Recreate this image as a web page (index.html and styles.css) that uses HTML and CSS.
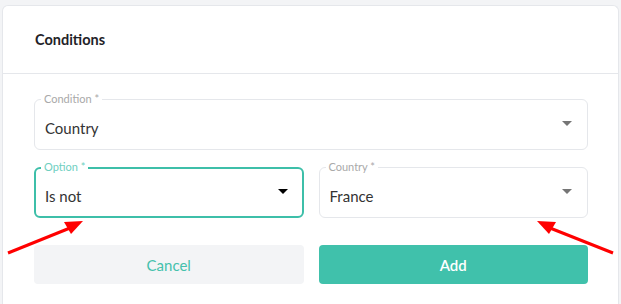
FILE: index.html
```html
<!DOCTYPE html>
<html lang="en">
<head>
    <meta charset="UTF-8">
    <title>Conditions</title>
    <link rel="stylesheet" href="styles.css">
</head>
<body>
    <div class="card">
        <div class="card-header">
            <h2>Conditions</h2>
        </div>
        <div class="card-body">
            <div class="field">
                <span class="field-label">Condition *</span>
                <span class="field-value">Country</span>
                <span class="caret"></span>
            </div>
            <div class="row">
                <div class="field focused">
                    <span class="field-label">Option *</span>
                    <span class="field-value">Is not</span>
                    <span class="caret"></span>
                </div>
                <div class="field">
                    <span class="field-label">Country *</span>
                    <span class="field-value">France</span>
                    <span class="caret"></span>
                </div>
            </div>
            <div class="row actions">
                <button class="btn btn-cancel">Cancel</button>
                <button class="btn btn-add">Add</button>
            </div>
        </div>
    </div>

    <!-- annotation arrows -->
    <svg class="arrows" width="621" height="304" viewBox="0 0 621 304">
        <line x1="8" y1="253" x2="70" y2="228" stroke="#f00" stroke-width="3"/>
        <polygon points="83,221 64,222 71,234" fill="#f00"/>
        <line x1="613" y1="253" x2="550" y2="228" stroke="#f00" stroke-width="3"/>
        <polygon points="537,221 549,234 556,222" fill="#f00"/>
    </svg>
</body>
</html>
```

FILE: styles.css
```css
html, body {
    height: 100%;
}
body {
    margin: 0;
    padding: 5px 2px 0 2px;
    box-sizing: border-box;
    background-color: #f3f4f6;
    font-family: Lato, "Noto Sans", sans-serif;
    color: #333;
}
.card {
    background-color: #fff;
    border: 1px solid #e5e7eb;
    border-bottom: none;
    border-radius: 6px 6px 0 0;
    height: 100%;
    box-sizing: border-box;
}
.card-header {
    height: 67px;
    padding-left: 32px;
    display: flex;
    align-items: center;
    border-bottom: 1px solid #e5e7eb;
}
.card-header h2 {
    margin: 0;
    font-size: 14.5px;
    font-weight: bold;
    color: #1f2328;
}
.card-body {
    padding: 25px 30px 0 31px;
    display: flex;
    flex-direction: column;
    gap: 17px;
}
.row {
    display: flex;
    gap: 15px;
}
.row .field {
    flex: 1;
}
.field {
    position: relative;
    height: 51px;
    box-sizing: border-box;
    border: 1px solid #e5e7eb;
    border-radius: 6px;
    display: flex;
    align-items: center;
    padding: 6px 10px 0 10px;
}
.field.focused {
    border: 2px solid #3dbfa9;
    padding-left: 9px;
    padding-right: 9px;
}
.field-label {
    position: absolute;
    top: -7px;
    left: 6px;
    padding: 0 3px;
    background-color: #fff;
    font-size: 11px;
    line-height: 12px;
    color: #a9a9a9;
}
.focused .field-label {
    top: -8px;
    left: 5px;
    color: #6fcfbf;
}
.field-value {
    flex: 1;
    font-size: 15px;
    color: #333;
}
.caret {
    width: 0;
    height: 0;
    border-left: 5px solid transparent;
    border-right: 5px solid transparent;
    border-top: 5px solid #757575;
    margin-top: -8px;
    margin-right: 5px;
}
.focused .caret {
    border-top-color: #000;
}
.actions {
    margin-top: 10px;
}
.btn {
    flex: 1;
    height: 39px;
    border: none;
    border-radius: 4px;
    font-family: inherit;
    font-size: 15px;
    cursor: pointer;
}
.btn-cancel {
    background-color: #f3f4f6;
    color: #45c1ac;
}
.btn-add {
    background-color: #40c1ab;
    color: #fff;
    font-weight: 600;
}
.arrows {
    position: absolute;
    left: 0;
    top: 0;
    pointer-events: none;
}
```
